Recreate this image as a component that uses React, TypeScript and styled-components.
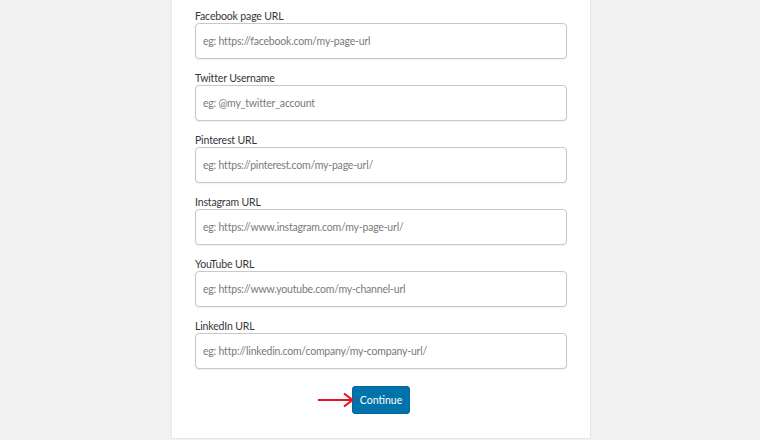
import React from 'react';
import styled, {createGlobalStyle} from 'styled-components';

const fields = [
    {label: 'Facebook page URL', placeholder: 'eg: https://facebook.com/my-page-url'},
    {label: 'Twitter Username', placeholder: 'eg: @my_twitter_account'},
    {label: 'Pinterest URL', placeholder: 'eg: https://pinterest.com/my-page-url/'},
    {label: 'Instagram URL', placeholder: 'eg: https://www.instagram.com/my-page-url/'},
    {label: 'YouTube URL', placeholder: 'eg: https://www.youtube.com/my-channel-url'},
    {label: 'LinkedIn URL', placeholder: 'eg: http://linkedin.com/company/my-company-url/'},
];

export default function App() {
    return (
        <Page>
            <GlobalStyle/>
            <Card>
                {fields.map((f) => (
                    <Field key={f.label}>
                        <Label>{f.label}</Label>
                        <Input type="text" placeholder={f.placeholder}/>
                    </Field>
                ))}
                <Actions>
                    <ButtonWrap>
                        <Arrow width="38" height="16" viewBox="0 0 38 16">
                            <path d="M1 8 H35" stroke="#e8141b" strokeWidth="2" fill="none"/>
                            <path d="M27 1.5 L35.5 8 L27 14.5" stroke="#e8141b" strokeWidth="2.2" fill="none"/>
                        </Arrow>
                        <Button type="button">Continue</Button>
                    </ButtonWrap>
                </Actions>
            </Card>
        </Page>
    );
}

const GlobalStyle = createGlobalStyle`
  html, body {
    margin: 0;
    padding: 0;
    background: #f1f1f1;
  }

  body {
    font-family: Lato, "Open Sans", sans-serif;
  }
`;

const Page = styled.div`
  display: flex;
  justify-content: center;
  width: 760px;
  height: 440px;
  overflow: hidden;
  padding-left: 2px;
  box-sizing: border-box;
`;

const Card = styled.div`
  width: 420px;
  height: 439px;
  box-sizing: border-box;
  background: #fff;
  border: 1px solid #e8e8e8;
  border-top: none;
  padding: 9px 23px 0;
  display: flex;
  flex-direction: column;
`;

const Field = styled.div`
  display: flex;
  flex-direction: column;
  margin-bottom: 12px;
`;

const Label = styled.label`
  font-size: 10.5px;
  letter-spacing: -0.15px;
  line-height: 14px;
  color: #32373c;
`;

const Input = styled.input`
  height: 36px;
  box-sizing: border-box;
  border: 1px solid #c8c8c8;
  border-radius: 4px;
  box-shadow: 0 1px 2px rgba(0, 0, 0, 0.07);
  padding: 0 7px;
  font-family: Lato, "Open Sans", sans-serif;
  font-size: 10.5px;
  letter-spacing: -0.2px;
  color: #32373c;
  outline: none;

  &::placeholder {
    color: #7a7a7a;
  }
`;

const Actions = styled.div`
  display: flex;
  justify-content: center;
  margin-top: 5px;
`;

const ButtonWrap = styled.div`
  position: relative;
`;

const Arrow = styled.svg`
  position: absolute;
  left: -35px;
  top: 6px;
`;

const Button = styled.button`
  height: 28px;
  padding: 0 7px;
  border: 1px solid #006799;
  border-radius: 3px;
  background: #0073aa;
  color: #fff;
  font-family: Lato, "Open Sans", sans-serif;
  font-size: 10.5px;
  cursor: pointer;
`;
